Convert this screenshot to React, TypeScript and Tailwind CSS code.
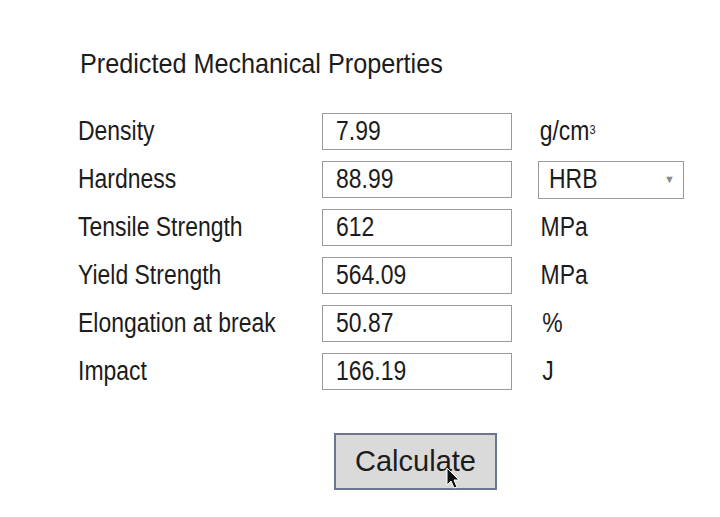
const rows = [
  { label: "Density", value: "7.99", unit: "g/cm³" },
  { label: "Hardness", value: "88.99", unit: "select" },
  { label: "Tensile Strength", value: "612", unit: "MPa" },
  { label: "Yield Strength", value: "564.09", unit: "MPa" },
  { label: "Elongation at break", value: "50.87", unit: "%" },
  { label: "Impact", value: "166.19", unit: "J" },
];

// the screenshot text is a narrow Helvetica, so squeeze the glyphs a bit
const narrow = "inline-block origin-left scale-x-[0.85] whitespace-nowrap";

function Unit({ unit }: { unit: string }) {
  if (unit === "select") {
    return (
      <div className="flex h-[38px] w-[146px] items-center justify-between border border-[#9a9a9a] bg-white pl-[10px] pr-[8px]">
        <span className={narrow}>HRB</span>
        <span className="text-[11px] text-[#8a8a8a]">▼</span>
      </div>
    );
  }
  if (unit === "g/cm³") {
    return (
      <span className={narrow + " pl-[2px]"}>
        g/cm<sup className="relative -top-[6px] text-[13px]">3</sup>
      </span>
    );
  }
  return <span className={narrow + (unit === "MPa" ? " pl-[3px]" : " pl-[5px]")}>{unit}</span>;
}

export default function App() {
  return (
    <div
      className="min-h-[517px] w-[720px] bg-white pl-[78px] pt-[50px] text-[#1c1c1c]"
      style={{ fontFamily: '"Liberation Sans", Arial, sans-serif' }}
    >
      <div className="pl-[2px] text-[28px] leading-none">
        <span className="inline-block origin-left scale-x-[0.9] whitespace-nowrap">
          Predicted Mechanical Properties
        </span>
      </div>

      <div className="mt-[35px] flex flex-col gap-[11px] text-[27px]">
        {rows.map((r) => (
          <div key={r.label} className="flex h-[37px] items-center">
            <div className="w-[244px]">
              <span className={narrow}>{r.label}</span>
            </div>
            <div className="flex h-[37px] w-[190px] items-center border border-[#9a9a9a] bg-white pl-[13px]">
              <span className={narrow}>{r.value}</span>
            </div>
            <div className="ml-[26px] flex items-center">
              <Unit unit={r.unit} />
            </div>
          </div>
        ))}
      </div>

      <div className="mt-[43px] pl-[256px]">
        <button className="relative h-[57px] w-[163px] border-2 border-[#6b7690] bg-[#dadada] text-[29px] leading-none text-[#1c1c1c]">
          Calculate
          <svg
            className="absolute left-[110px] top-[32px]"
            width="16"
            height="24"
            viewBox="0 0 16 24"
          >
            <path
              d="M1 1 L1 18 L5 14 L8 21 L11 20 L8 13 L13 13 Z"
              fill="#111"
              stroke="#fff"
              strokeWidth="1"
            />
          </svg>
        </button>
      </div>
    </div>
  );
}
